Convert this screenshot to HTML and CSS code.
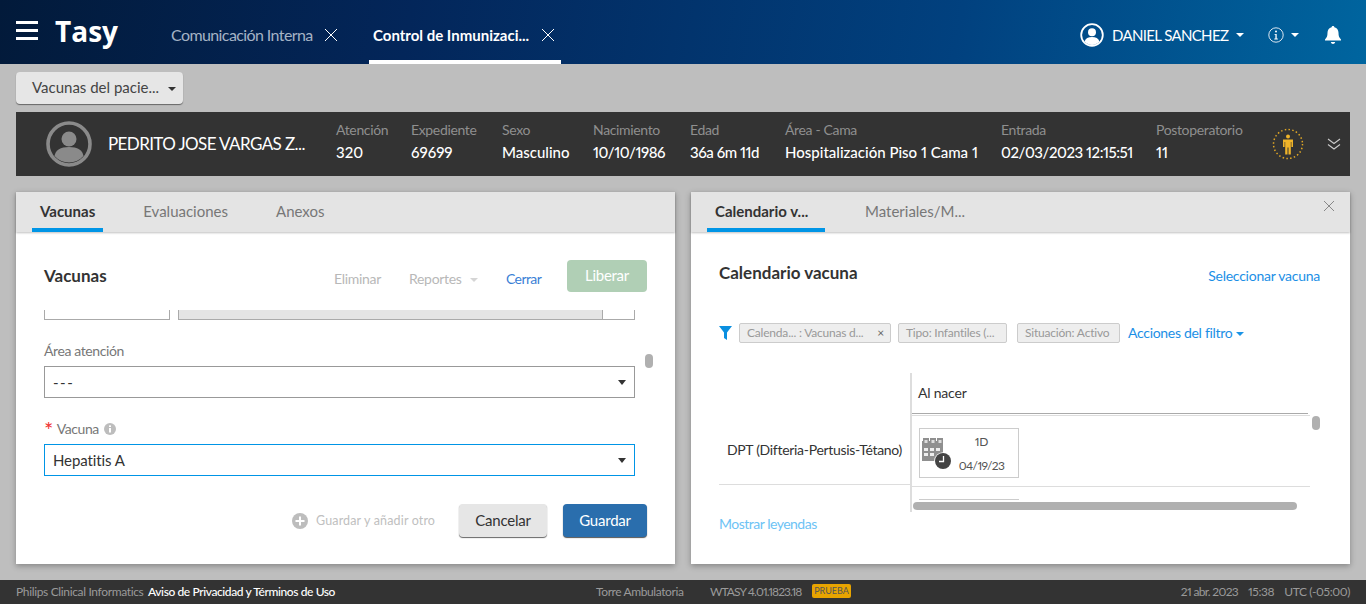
FILE: index.html
```html
<!DOCTYPE html>
<html lang="es">
<head>
  <meta charset="UTF-8" />
  <meta name="viewport" content="width=device-width, initial-scale=1.0" />
  <title>Tasy</title>
  <link rel="stylesheet" href="styles.css">
</head>
<body>
  <header class="topbar">
    <div class="burger"><span></span><span></span><span></span></div>
    <div class="logo">Tasy</div>
    <nav class="apptabs">
      <div class="apptab">
        Comunicación Interna
        <svg class="x" viewBox="0 0 14 14"><path d="M1 1l12 12M13 1L1 13"/></svg>
      </div>
      <div class="apptab active">
        Control de Inmunizaci...
        <svg class="x" viewBox="0 0 14 14"><path d="M1 1l12 12M13 1L1 13"/></svg>
      </div>
    </nav>
    <div class="userbox">
      <svg class="usericon" viewBox="0 0 24 24">
        <circle cx="12" cy="12" r="10.8" fill="none" stroke="#fff" stroke-width="1.8"/>
        <circle cx="12" cy="9.2" r="4" fill="#fff"/>
        <path d="M4.6 18.6c.8-3.2 3.6-4.6 7.4-4.6s6.6 1.4 7.4 4.6A10 10 0 0 1 12 22a10 10 0 0 1-7.4-3.4z" fill="#fff"/>
      </svg>
      <span class="username">DANIEL SANCHEZ</span>
      <i class="caret white"></i>
      <svg class="infoicon" viewBox="0 0 16 16">
        <circle cx="8" cy="8" r="7.2" fill="none" stroke="#dbe6f0" stroke-width="1"/>
        <circle cx="8" cy="4.6" r="1" fill="#fff"/>
        <path d="M6.5 7h2.2v4.6h1.1v.8H6.3v-.8h1.1V7.800H6.500z" fill="#fff"/>
      </svg>
      <i class="caret white"></i>
      <svg class="bell" viewBox="0 0 18 20">
        <path d="M9 1c.8 0 1.3.5 1.4 1.2 2.7.6 4.1 2.8 4.1 5.600 0 3.400.7 5 2.500 6.600v1H1v-1c1.800-1.600 2.500-3.200 2.500-6.600 0-2.800 1.400-5 4.100-5.600C7.700 1.500 8.200 1 9 1z" fill="#fff"/>
        <path d="M6.800 17h4.400c-.3 1.200-1.100 2-2.200 2s-1.900-.8-2.200-2z" fill="#fff"/>
      </svg>
    </div>
  </header>

  <div class="subbar">
    <button class="menubtn">Vacunas del pacie... <i class="caret dark"></i></button>
  </div>

  <section class="patient">
    <svg class="avatar" viewBox="0 0 46 46">
      <circle cx="23" cy="23" r="21" fill="none" stroke="#8a8a8a" stroke-width="3.600"/>
      <circle cx="23" cy="18" r="7.500" fill="#8a8a8a"/>
      <path d="M8.500 35c1-6 6-9 14.500-9s13.500 3 14.500 9A20 20 0 0 1 23 41.500 20 20 0 0 1 8.500 35z" fill="#8a8a8a"/>
    </svg>
    <div class="pname">PEDRITO JOSE VARGAS Z...</div>
    <div class="pfields">
      <div><label>Atención</label><b>320</b></div>
      <div><label>Expediente</label><b>69699</b></div>
      <div><label>Sexo</label><b>Masculino</b></div>
      <div><label>Nacimiento</label><b class="tight">10/10/1986</b></div>
      <div><label>Edad</label><b class="tight">36a 6m 11d</b></div>
      <div><label>Área - Cama</label><b>Hospitalización Piso 1 Cama 1</b></div>
      <div><label>Entrada</label><b class="tight">02/03/2023 12:15:51</b></div>
      <div><label>Postoperatorio</label><b>11</b></div>
    </div>
    <svg class="status" viewBox="0 0 32 32">
      <circle cx="16" cy="16" r="14.500" fill="none" stroke="#e2a826" stroke-width="1.500" stroke-dasharray="1.500 2.300"/>
      <circle cx="16" cy="8.500" r="2" fill="#f0b429"/>
      <path d="M11 11.500h10v7.500h-1.600v-5h-.6v12.500h-2.300v-7h-1v7h-2.300v-12.500h-.6v5H11z" fill="#f0b429"/>
    </svg>
    <svg class="chev" viewBox="0 0 14 14"><path d="M1 2l6 4.500L13 2M1 7.500l6 4.500 6-4.500"/></svg>
  </section>

  <main class="panels">
    <section class="panel">
      <div class="tabs">
        <div class="tab active">Vacunas</div>
        <div class="tab">Evaluaciones</div>
        <div class="tab">Anexos</div>
      </div>
      <div class="formhead">
        <h3>Vacunas</h3>
        <div class="actions">
          <span class="off act-del">Eliminar</span>
          <span class="off act-rep">Reportes <i class="caret faint"></i></span>
          <span class="link act-close">Cerrar</span>
          <button class="btn release">Liberar</button>
        </div>
      </div>
      <div class="formbody">
        <div class="cutrow">
          <div class="cut-a"></div>
          <div class="cut-b"><div></div></div>
        </div>
        <div class="field first">
          <label>Área atención</label>
          <div class="select"><span class="dashes">---</span><i class="caret dark small"></i></div>
        </div>
        <div class="field">
          <label><em>*</em> Vacuna
            <svg class="hint" viewBox="0 0 12 12"><circle cx="6" cy="6" r="6" fill="#bdbdbd"/><rect x="5" y="5" width="2" height="4.500" fill="#fff"/><rect x="5" y="2.400" width="2" height="1.600" fill="#fff"/></svg>
          </label>
          <div class="select focus"><span>Hepatitis A</span><i class="caret dark small"></i></div>
        </div>
        <span class="thumb formthumb"></span>
      </div>
      <div class="formfoot">
        <svg class="plus" viewBox="0 0 16 16"><circle cx="8" cy="8" r="8" fill="#bdbdbd"/><path d="M7 3.500h2V7h3.500v2H9v3.500H7V9H3.500V7H7z" fill="#fff"/></svg>
        <span class="addother">Guardar y añadir otro</span>
        <button class="btn cancel">Cancelar</button>
        <button class="btn save">Guardar</button>
      </div>
    </section>

    <section class="panel">
      <div class="tabs right">
        <div class="tab active">Calendario v...</div>
        <div class="tab">Materiales/M...</div>
        <svg class="panelclose" viewBox="0 0 12 12"><path d="M1 1l10 10M11 1L1 11"/></svg>
      </div>
      <div class="calhead">
        <h3>Calendario vacuna</h3>
        <span class="link">Seleccionar vacuna</span>
      </div>
      <div class="filters">
        <svg class="funnel" viewBox="0 0 13 14"><path d="M0 0h13L8 6.500V14L5 12V6.500z" fill="#0a8fe0"/></svg>
        <span class="chip c1">Calenda... : Vacunas d... <u>×</u></span>
        <span class="chip c2">Tipo: Infantiles (...</span>
        <span class="chip c3">Situación: Activo</span>
        <span class="link fact">Acciones del filtro <i class="caret blue"></i></span>
      </div>
      <div class="sched">
        <div class="schedleft"><div class="vname">DPT (Difteria-Pertusis-Tétano)</div></div>
        <div class="schedright">
          <div class="colhead">Al nacer</div>
          <div class="dose-row">
            <div class="dose">
              <svg class="calicon" viewBox="0 0 32 33">
                <path d="M1 3h1V0h6v3h1V0h6v3h1V0h6v3v20H1z" fill="#8f8f8f"/>
                <g fill="#ddd"><rect x="3.500" y="2" width="3" height="3"/><rect x="10.500" y="2" width="3" height="3"/><rect x="17.500" y="2" width="3" height="3"/></g>
                <g fill="#eee"><rect x="3" y="10" width="4" height="3"/><rect x="9" y="10" width="4" height="3"/><rect x="15" y="10" width="4" height="3"/><rect x="3" y="15" width="4" height="3"/><rect x="9" y="15" width="4" height="3"/></g>
                <circle cx="22" cy="23" r="8.800" fill="#fff"/>
                <circle cx="22" cy="23" r="8" fill="#444"/>
                <path d="M22.500 18v5.500H18" fill="none" stroke="#fff" stroke-width="1.300"/>
              </svg>
              <div class="dosetext"><span>1D</span><span class="dosedate">04/19/23</span></div>
            </div>
          </div>
          <div class="dose-next"></div>
          <span class="thumb vthumb"></span>
          <span class="hthumb"></span>
        </div>
      </div>
      <div class="legend">Mostrar leyendas</div>
    </section>
  </main>

  <footer class="statusbar">
    <span class="f-phil">Philips Clinical Informatics</span>
    <span class="f-aviso">Aviso de Privacidad y Términos de Uso</span>
    <span class="f-torre">Torre Ambulatoria</span>
    <span class="f-ver">WTASY 4.01.1823.18</span>
    <span class="f-badge">PRUEBA</span>
    <span class="f-date">21 abr. 2023</span>
    <span class="f-time">15:38</span>
    <span class="f-utc">UTC (-05:00)</span>
  </footer>
</body>
</html>
```

FILE: styles.css
```css
* { box-sizing: border-box; }

html, body { height: 100%; }

body {
  margin: 0;
  width: 1366px;
  height: 604px;
  overflow: hidden;
  background: #bebebe;
  font-family: 'Lato', 'Liberation Sans', sans-serif;
  font-size: 15px;
  font-variant-numeric: proportional-nums;
  letter-spacing: -0.2px;
  color: #333;
  display: flex;
  flex-direction: column;
}

button { font-family: inherit; border: none; letter-spacing: inherit; }

/* carets */
.caret {
  display: inline-block;
  width: 0;
  height: 0;
  border-left: 4px solid transparent;
  border-right: 4px solid transparent;
  border-top: 4px solid #333;
  vertical-align: middle;
}
.caret.white { border-top-color: #fff; }
.caret.blue { border-top-color: #1b94e6; }
.caret.faint { border-top-color: #d5d5d5; }
.caret.small { border-top-width: 5px; }

/* top bar */
.topbar {
  height: 64px;
  flex: none;
  display: flex;
  align-items: center;
  padding-left: 16px;
  background: linear-gradient(100deg, #021a3a 0%, #03265a 30%, #01417f 70%, #00659f 100%);
  color: #fff;
}
.burger {
  width: 22px;
  display: flex;
  flex-direction: column;
  gap: 5px;
  margin-top: -4px;
}
.burger span { height: 3px; background: #fff; }
.logo {
  margin-left: 17px;
  font-family: 'Open Sans', sans-serif;
  font-size: 28px;
  font-weight: 700;
  letter-spacing: 0;
  margin-top: -2px;
  width: 64px;
}
.apptabs { display: flex; height: 64px; margin-left: 44px; }
.apptab {
  width: 192px;
  display: flex;
  align-items: center;
  gap: 11px;
  font-size: 16px;
  letter-spacing: -0.6px;
  color: #a5b3c5;
  padding: 5px 0 0 8px;
  white-space: nowrap;
}
.apptab:first-child { margin-right: 14px; }
.apptab.active {
  color: #fff;
  font-weight: 700;
  font-size: 15px;
  letter-spacing: 0;
  gap: 12px;
  padding: 10px 0 0 4px;
  border-bottom: 4px solid #fff;
}
.x { width: 14px; height: 14px; flex: none; }
.x path { stroke: #fff; stroke-width: 1; fill: none; }
.userbox { margin-left: auto; display: flex; align-items: center; padding-right: 24px; margin-top: 6px; }
.usericon { width: 24px; height: 24px; }
.username { margin-left: 8px; font-size: 15px; letter-spacing: -0.65px; width: 124px; white-space: nowrap; }
.infoicon { width: 16px; height: 16px; margin-left: 24px; margin-right: 7px; }
.bell { width: 18px; height: 20px; margin-left: 25px; }

/* function menu */
.subbar { height: 48px; flex: none; padding: 8px 16px; }
.menubtn {
  width: 167px;
  height: 32px;
  background: #e6e6e6;
  border-radius: 4px;
  box-shadow: 0 1px 1px #666;
  color: #444;
  font-size: 15px;
  letter-spacing: 0;
  padding: 0 0 2px 16px;
  text-align: left;
  white-space: nowrap;
}
.menubtn .caret { margin-left: 5px; }

/* patient bar */
.patient {
  height: 64px;
  flex: none;
  margin: 0 16px;
  background: #333;
  display: flex;
  align-items: center;
  padding-left: 30px;
  color: #fff;
}
.avatar { width: 46px; height: 46px; flex: none; }
.pname { width: 228px; margin-left: 16px; font-size: 17px; letter-spacing: -0.6px; white-space: nowrap; padding-bottom: 2px; }
.pfields {
  display: grid;
  grid-template-columns: 75px 91px 91px 97px 95px 216px 155px 100px;
  font-size: 15px;
  white-space: nowrap;
  margin-top: -4px;
}
.pfields label { display: block; color: #8f8f8f; font-size: 14px; letter-spacing: -0.35px; line-height: 20px; }
.pfields b { display: block; font-weight: 500; line-height: 24px; letter-spacing: 0; }
.pfields b.tight { letter-spacing: -0.45px; }
.status { width: 32px; height: 32px; margin-left: 16px; flex: none; }
.chev { width: 14px; height: 14px; margin-left: 23px; flex: none; }
.chev path { fill: none; stroke: #ccc; stroke-width: 1.100; }

/* panels */
.panels {
  flex: 1;
  min-height: 0;
  display: grid;
  grid-template-columns: 659px 659px;
  gap: 16px;
  padding: 16px;
}
.panel {
  background: #fff;
  box-shadow: 0 2px 6px rgba(0, 0, 0, 0.3);
  display: flex;
  flex-direction: column;
  position: relative;
  min-height: 0;
}
.tabs {
  height: 40px;
  flex: none;
  background: #e4e4e4;
  display: flex;
  padding-left: 16px;
  gap: 32px;
  box-shadow: 0 1px 2px rgba(0, 0, 0, 0.25);
  position: relative;
}
.tab {
  height: 40px;
  padding: 10px 8px 0;
  font-size: 15px;
  letter-spacing: 0;
  color: #777;
  white-space: nowrap;
}
.tab.active { color: #333; font-weight: 700; border-bottom: 4px solid #0095e6; }
.tabs.right .tab.active { width: 118px; }
.panelclose { position: absolute; right: 15px; top: 8px; width: 12px; height: 12px; }
.panelclose path { stroke: #888; stroke-width: 1; fill: none; }

h3 { margin: 0; font-size: 17px; font-weight: 700; letter-spacing: 0; color: #333; }

.formhead {
  height: 78px;
  flex: none;
  padding: 28px 28px 0;
  display: flex;
  justify-content: space-between;
}
.formhead h3 { padding-top: 5px; }
.actions { display: flex; align-items: flex-start; font-size: 14px; letter-spacing: -0.3px; }
.actions span { padding-top: 10px; white-space: nowrap; }
.actions .caret { margin-left: 5px; }
.off { color: #b8b8b8; }
.link { color: #1b8fe6; }
.act-del { width: 75px; }
.act-rep { width: 97px; }
.actions .act-close { width: 61px; color: #3b7fd6; letter-spacing: -0.6px; }
.btn { font-size: 15px; border-radius: 4px; padding: 0 0 2px; }
.release { width: 80px; height: 32px; background: #b0cfb5; color: #fff; }

.formbody { position: relative; height: 186px; flex: none; padding: 0 40px 0 28px; overflow: hidden; }
.cutrow { display: flex; gap: 8px; height: 10px; }
.cut-a { width: 126px; border: 1px solid #aaa; border-top: none; }
.cut-b { flex: 1; border: 1px solid #aaa; border-top: none; }
.cut-b div { width: 424px; height: 9px; background: #e4e4e4; border-right: 1px solid #aaa; }
.field { margin-top: 21px; }
.field label { display: block; font-size: 14px; letter-spacing: -0.4px; line-height: 20px; color: #777; margin-bottom: 5px; }
.field em { font-style: normal; color: #f03030; font-size: 22px; line-height: 14px; vertical-align: -4px; margin-right: 1px; }
.hint { width: 12px; height: 12px; margin-left: 2px; vertical-align: -1px; }
.select {
  height: 32px;
  border: 1px solid #999;
  display: flex;
  align-items: center;
  justify-content: space-between;
  padding: 0 8px;
  font-size: 15px;
  letter-spacing: -0.1px;
  color: #333;
}
.select .dashes { letter-spacing: 1.500px; }
.select.focus { border-color: #0095e6; }
.thumb {
  position: absolute;
  width: 8px;
  height: 14px;
  border-radius: 4px;
  background: #b0b0b0;
}
.formthumb { left: 629px; top: 44px; }

.formfoot {
  display: flex;
  align-items: center;
  padding: 0 28px 0 0;
  justify-content: flex-end;
  height: 33px;
  margin-top: 8px;
}
.plus { width: 16px; height: 16px; margin-right: 8px; }
.addother { font-size: 12.500px; letter-spacing: 0.15px; color: #c0c0c0; width: 143px; }
.cancel { width: 88px; height: 33px; background: #e6e6e6; color: #333; box-shadow: 0 1px 1px #666; }
.save { width: 84px; height: 33px; background: #2a6ead; color: #fff; box-shadow: 0 1px 1px #555; margin-left: 16px; }

/* calendar side */
.calhead {
  height: 53px;
  flex: none;
  display: flex;
  justify-content: space-between;
  padding: 31px 30px 0 28px;
}
.calhead h3 { line-height: 20px; }
.calhead .link { font-size: 14px; letter-spacing: -0.25px; line-height: 26px; }
.filters {
  display: flex;
  align-items: center;
  height: 20px;
  margin-top: 38px;
  padding-left: 28px;
  font-size: 12px;
  white-space: nowrap;
}
.funnel { width: 13px; height: 14px; margin-right: 7px; }
.chip {
  height: 20px;
  background: #eee;
  border: 1px solid #ccc;
  border-radius: 2px;
  color: #999;
  line-height: 18px;
  padding-left: 7px;
  display: flex;
  position: relative;
}
.chip u { text-decoration: none; color: #666; position: absolute; right: 6px; }
.c1 { width: 152px; }
.c2 { width: 109px; margin-left: 7px; }
.c3 { width: 103px; margin-left: 10px; }
.fact { margin: 0 0 2px 8px; font-size: 14px; letter-spacing: -0.3px; }
.sched { display: flex; margin: 30px 30px 0 28px; height: 139px; position: relative; }
.schedleft { width: 191px; padding-top: 42px; flex: none; }
.vname {
  height: 70px;
  border-bottom: 1px solid #ddd;
  font-size: 14px;
  letter-spacing: -0.3px;
  display: flex;
  align-items: center;
  justify-content: flex-end;
  padding-right: 8px;
  white-space: nowrap;
  color: #333;
}
.schedright { flex: 1; border-left: 2px solid #ddd; position: relative; overflow: hidden; }
.colhead {
  height: 41px;
  margin-right: 12px;
  padding: 11px 0 0 6px;
  font-size: 14px;
  border-bottom: 1px solid #aaa;
  color: #333;
}
.dose-row { margin: 1px 10px 0 0; border-top: 1px solid #ddd; height: 72px; padding: 12px 0 0 7px; border-bottom: 1px solid #ddd; }
.dose {
  width: 100px;
  height: 50px;
  border: 1px solid #ccc;
  display: flex;
  padding: 9px 8px 0 1px;
}
.calicon { width: 32px; height: 33px; flex: none; }
.dosetext {
  flex: 1;
  display: flex;
  flex-direction: column;
  align-items: center;
  gap: 7px;
  font-size: 12px;
  color: #555;
  margin-top: -5px;
  line-height: 17px;
}
.dosetext .dosedate { letter-spacing: -0.6px; }
.dose-next { width: 100px; margin: 12px 0 0 7px; border-top: 1px solid #ccc; }
.vthumb { right: 0; top: 43px; }
.hthumb {
  position: absolute;
  left: 1px;
  bottom: 2px;
  width: 384px;
  height: 8px;
  border-radius: 4px;
  background: #b0b0b0;
}
.legend { margin: 3px 0 0 28px; font-size: 14px; letter-spacing: -0.5px; color: #6dc3f5; }

/* status bar */
.statusbar {
  height: 24px;
  flex: none;
  background: #333;
  color: #9a9a9a;
  font-size: 12px;
  letter-spacing: -0.4px;
  display: flex;
  align-items: center;
  padding: 0 16px 2px;
  white-space: nowrap;
}
.f-phil { width: 132px; letter-spacing: -0.35px; }
.f-aviso { width: 448px; color: #fff; font-weight: 500; }
.f-torre { width: 114px; }
.f-ver { width: 102px; letter-spacing: -0.9px; }
.f-badge {
  width: 39px;
  height: 14px;
  background: #e8a400;
  color: #555;
  font-size: 9px;
  letter-spacing: 0;
  line-height: 14px;
  text-align: center;
  border-radius: 2px;
}
.f-date { margin-left: auto; letter-spacing: -0.7px; }
.f-time { margin-left: 10px; }
.f-utc { margin-left: 10px; }
```
